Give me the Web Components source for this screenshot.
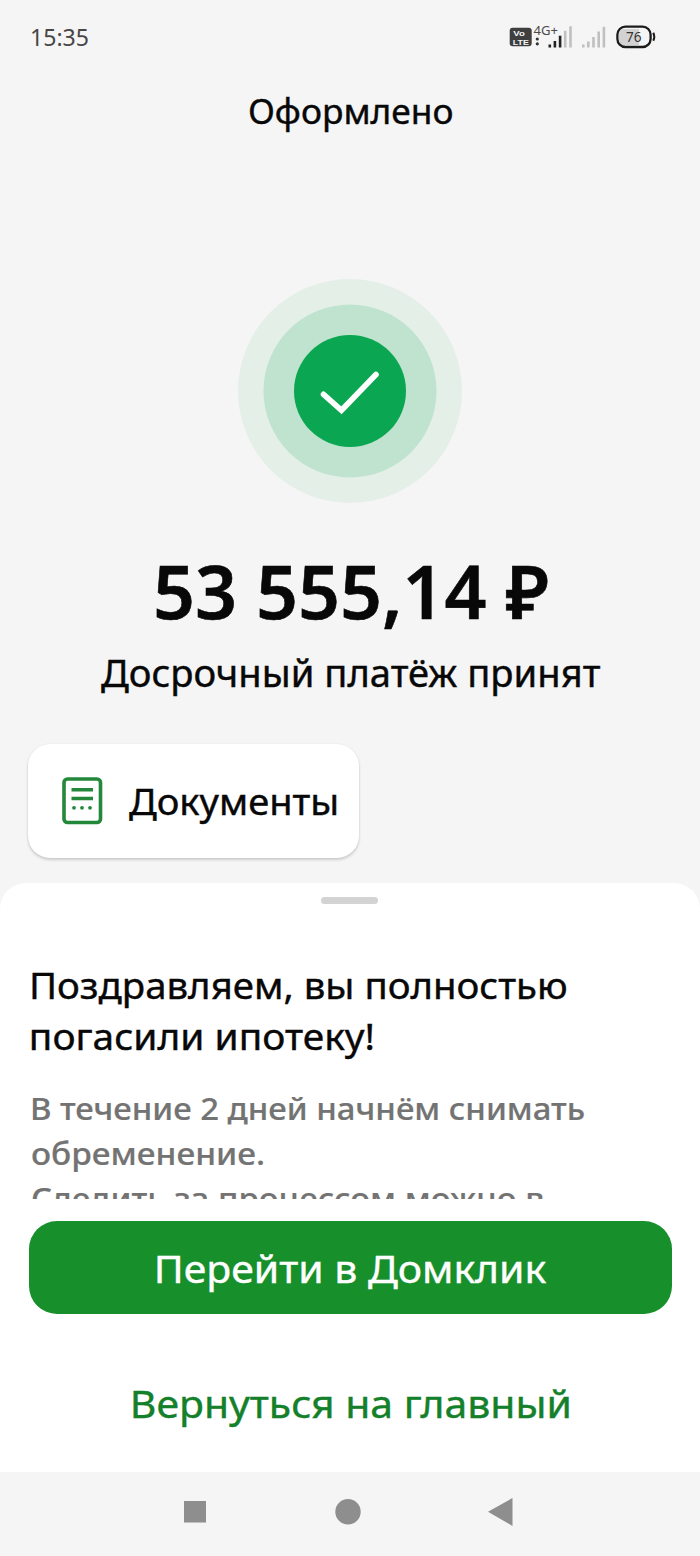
<!DOCTYPE html>
<html lang="ru">
<head>
<meta charset="utf-8">
<title>Оформлено</title>
<style>
html,body{margin:0;padding:0}
body{background:#f5f5f5;color:#080808;font-family:"Noto Sans","Open Sans",sans-serif;width:700px;height:1556px;overflow:hidden}
</style>
</head>
<body>
<payment-screen></payment-screen>
<script>
function define(name, html, after) {
  const t = document.createElement('template');
  t.innerHTML = html;
  customElements.define(name, class extends HTMLElement {
    connectedCallback() {
      if (this.shadowRoot) return;
      this.attachShadow({mode: 'open'}).append(t.content.cloneNode(true));
      if (after) after(this);
    }
  });
}

/* One line of text, widened or narrowed so its visible glyphs span the "width" attribute. */
define('fit-text', `<style>:host{display:block;white-space:pre;flex:none}span{display:block;width:max-content;transform-origin:0 50%}</style><span><slot></slot></span>`, el => {
  const target = parseFloat(el.getAttribute('width'));
  const cs = getComputedStyle(el);
  const c = document.createElement('canvas').getContext('2d');
  c.font = cs.fontWeight + ' ' + cs.fontSize + ' ' + cs.fontFamily;
  const m = c.measureText(el.textContent);
  const scale = target / (m.actualBoundingBoxLeft + m.actualBoundingBoxRight);
  el.style.width = target + 'px';
  el.shadowRoot.querySelector('span').style.transform =
    `translateX(${(m.actualBoundingBoxLeft * scale).toFixed(2)}px) scaleX(${scale.toFixed(4)})`;
});

define('status-bar', `<style>
:host{display:flex;justify-content:space-between;height:74px;box-sizing:border-box;padding:15px 30px 0 32px;color:#474747}
fit-text{font-size:23.5px;line-height:44px}
svg{display:block}
</style>
<fit-text width="56.5">15:35</fit-text>
<svg width="170" height="45" viewBox="0 0 170 45" font-family="Noto Sans, sans-serif">
<rect x="9.7" y="12.8" width="22" height="18.4" rx="3" fill="#3f3f3f"/>
<g font-family="Liberation Sans, sans-serif" font-weight="700" font-size="7.9" fill="#f5f5f5"><text x="13.3" y="20.800" textLength="11.500" lengthAdjust="spacingAndGlyphs">Vo</text>
<text x="12.800" y="29.500" textLength="16" lengthAdjust="spacingAndGlyphs">LTE</text></g>
<text x="33.5" y="20.4" font-size="12.500" fill="#4c4c4c" textLength="24.500" lengthAdjust="spacingAndGlyphs">4G+</text>
<circle cx="37.3" cy="24" r="1.6" fill="#333"/><circle cx="37.3" cy="28.8" r="1.6" fill="#333"/>
<g fill="#222"><rect x="48.5" y="29.5" width="2.6" height="3"/><rect x="53.6" y="26" width="2.6" height="6.5"/><rect x="58.8" y="20.7" width="2.6" height="11.8"/></g>
<g fill="#c0c0c0"><rect x="63.9" y="15.8" width="2.6" height="16.7"/><rect x="69.2" y="11.3" width="2.6" height="21.2"/>
<rect x="82" y="29.5" width="2.6" height="3"/><rect x="87" y="26.5" width="2.6" height="6"/><rect x="92.2" y="22" width="2.6" height="10.5"/><rect x="97.4" y="16.5" width="2.6" height="16"/><rect x="102.6" y="11.8" width="2.6" height="20.7"/></g>
<path d="M124 14h15v16h-15a5 5 0 0 1-5-5v-6a5 5 0 0 1 5-5z" fill="#d2d2d2"/>
<rect x="117.4" y="11.6" width="33.2" height="20.4" rx="8" fill="none" stroke="#1b1b1b" stroke-width="2.3"/>
<path d="M153.300 17.800q2 4 0 8" fill="none" stroke="#1b1b1b" stroke-width="2"/>
<text x="126" y="27" font-size="14.500" fill="#333" textLength="15.500" lengthAdjust="spacingAndGlyphs">76</text>
</svg>`);

define('screen-title', `<style>:host{display:flex;justify-content:center;height:72px;line-height:73.500px;font-size:34.5px;-webkit-text-stroke:.4px currentColor;padding-left:2px}</style><slot></slot>`);

define('success-mark', `<style>:host{display:block;margin:133px auto 0;width:224px;height:224px}svg{display:block}</style>
<svg width="224" height="224" viewBox="0 0 224 224"><circle cx="112" cy="112" r="112" fill="#e4efe8"/><circle cx="112" cy="112" r="86.500" fill="#bfe3cf"/><circle cx="112" cy="112" r="56" fill="#0aa651"/><path d="M85.500 115.300 103.500 131.300 138 95.500" fill="none" stroke="#fff" stroke-width="5.600" stroke-linecap="round" stroke-linejoin="miter"/></svg>`);

define('payment-summary', `<style>
:host{display:flex;flex-direction:column;align-items:center;padding-top:37px}
.amount{height:100px;line-height:101px;font-size:73.5px;font-weight:600;padding-left:3px;-webkit-text-stroke:.6px currentColor}
.note{height:64px;line-height:65px;font-size:37.500px;-webkit-text-stroke:.4px currentColor}
</style><div class="amount"><slot name="amount"></slot></div><div class="note"><slot name="note"></slot></div>`);

define('action-card', `<style>
:host{display:flex;align-items:center;box-sizing:border-box;width:331px;height:114px;margin:40px 0 0 28px;padding-left:34px;gap:26px;background:#fff;border-radius:22px;box-shadow:0 2px 3px rgba(0,0,0,.17),0 0 2px rgba(0,0,0,.07);font-size:37px;line-height:112px;-webkit-text-stroke:.4px currentColor}
svg{display:block;flex:none}
</style>
<svg width="40.500" height="48" viewBox="0 0 40.500 48"><rect x="2" y="2" width="36.500" height="43.500" rx="3.500" fill="none" stroke="#23883a" stroke-width="3.600"/><path d="M9.500 12.800h21.500M9.500 21.500h21.500" stroke="#23883a" stroke-width="3.400"/><g fill="#23883a"><circle cx="12" cy="30.800" r="1.900"/><circle cx="20" cy="30.800" r="1.900"/><circle cx="28" cy="30.800" r="1.900"/></g></svg>
<slot></slot>`);

define('bottom-sheet', `<style>
:host{display:block;margin-top:25px;height:589px;background:#fff;border-radius:26px 26px 0 0}
.scroll{height:316px;box-sizing:border-box;overflow:hidden;padding:14.400px 0 0 31.500px}
.handle{width:57px;height:7px;border-radius:4px;background:#d3d3d3;margin-left:289.800px}
h2{margin:55px 0 25px;font-size:37px;line-height:51px;font-weight:400;-webkit-text-stroke:.4px currentColor}
p{margin:0;font-size:31.500px;line-height:44.700px;font-weight:500;color:#737373;-webkit-text-stroke:.2px currentColor}
</style>
<div class="scroll"><div class="handle"></div><h2><slot name="heading"></slot></h2><p><slot name="body"></slot></p></div>
<slot></slot>`);

define('app-button', `<style>
:host{display:flex;justify-content:center;font-size:39px;-webkit-text-stroke:.4px currentColor}
:host([kind=primary]){margin:21.500px 28.500px 0;height:93.500px;line-height:93.500px;border-radius:28px;background:#178f2b;color:#fff;padding-left:3px}
:host([kind=link]){margin-top:59px;height:60px;line-height:60px;color:#14802a;padding-left:1px}
</style><slot></slot>`);

define('nav-bar', `<style>:host{display:block;height:84px;background:#f5f5f5}svg{display:block}</style>
<svg width="700" height="84" viewBox="0 0 700 84" fill="#8e8e8e"><rect x="184" y="29" width="22" height="21.500"/><circle cx="348" cy="39.800" r="12.700"/><path d="M488 39.700 512.500 26v28z"/></svg>`);

define('payment-screen', `<style>:host{display:flex;flex-direction:column;width:700px;height:1556px;background:#f5f5f5}</style>
<status-bar></status-bar>
<screen-title><fit-text width="202">Оформлено</fit-text></screen-title>
<success-mark></success-mark>
<payment-summary><fit-text slot="amount" width="391.500">53 555,14 ₽</fit-text><fit-text slot="note" width="499">Досрочный платёж принят</fit-text></payment-summary>
<action-card><fit-text width="207">Документы</fit-text></action-card>
<bottom-sheet>
<fit-text slot="heading" width="534">Поздравляем, вы полностью</fit-text><fit-text slot="heading" width="341">погасили ипотеку!</fit-text>
<fit-text slot="body" width="552.500">В течение 2 дней начнём снимать</fit-text><fit-text slot="body" width="231.500">обременение.</fit-text><fit-text slot="body" width="511">Следить за процессом можно в</fit-text>
<app-button kind="primary"><fit-text width="389.500">Перейти в Домклик</fit-text></app-button>
<app-button kind="link"><fit-text width="435.500">Вернуться на главный</fit-text></app-button>
</bottom-sheet>
<nav-bar></nav-bar>`);
</script>
</body>
</html>
